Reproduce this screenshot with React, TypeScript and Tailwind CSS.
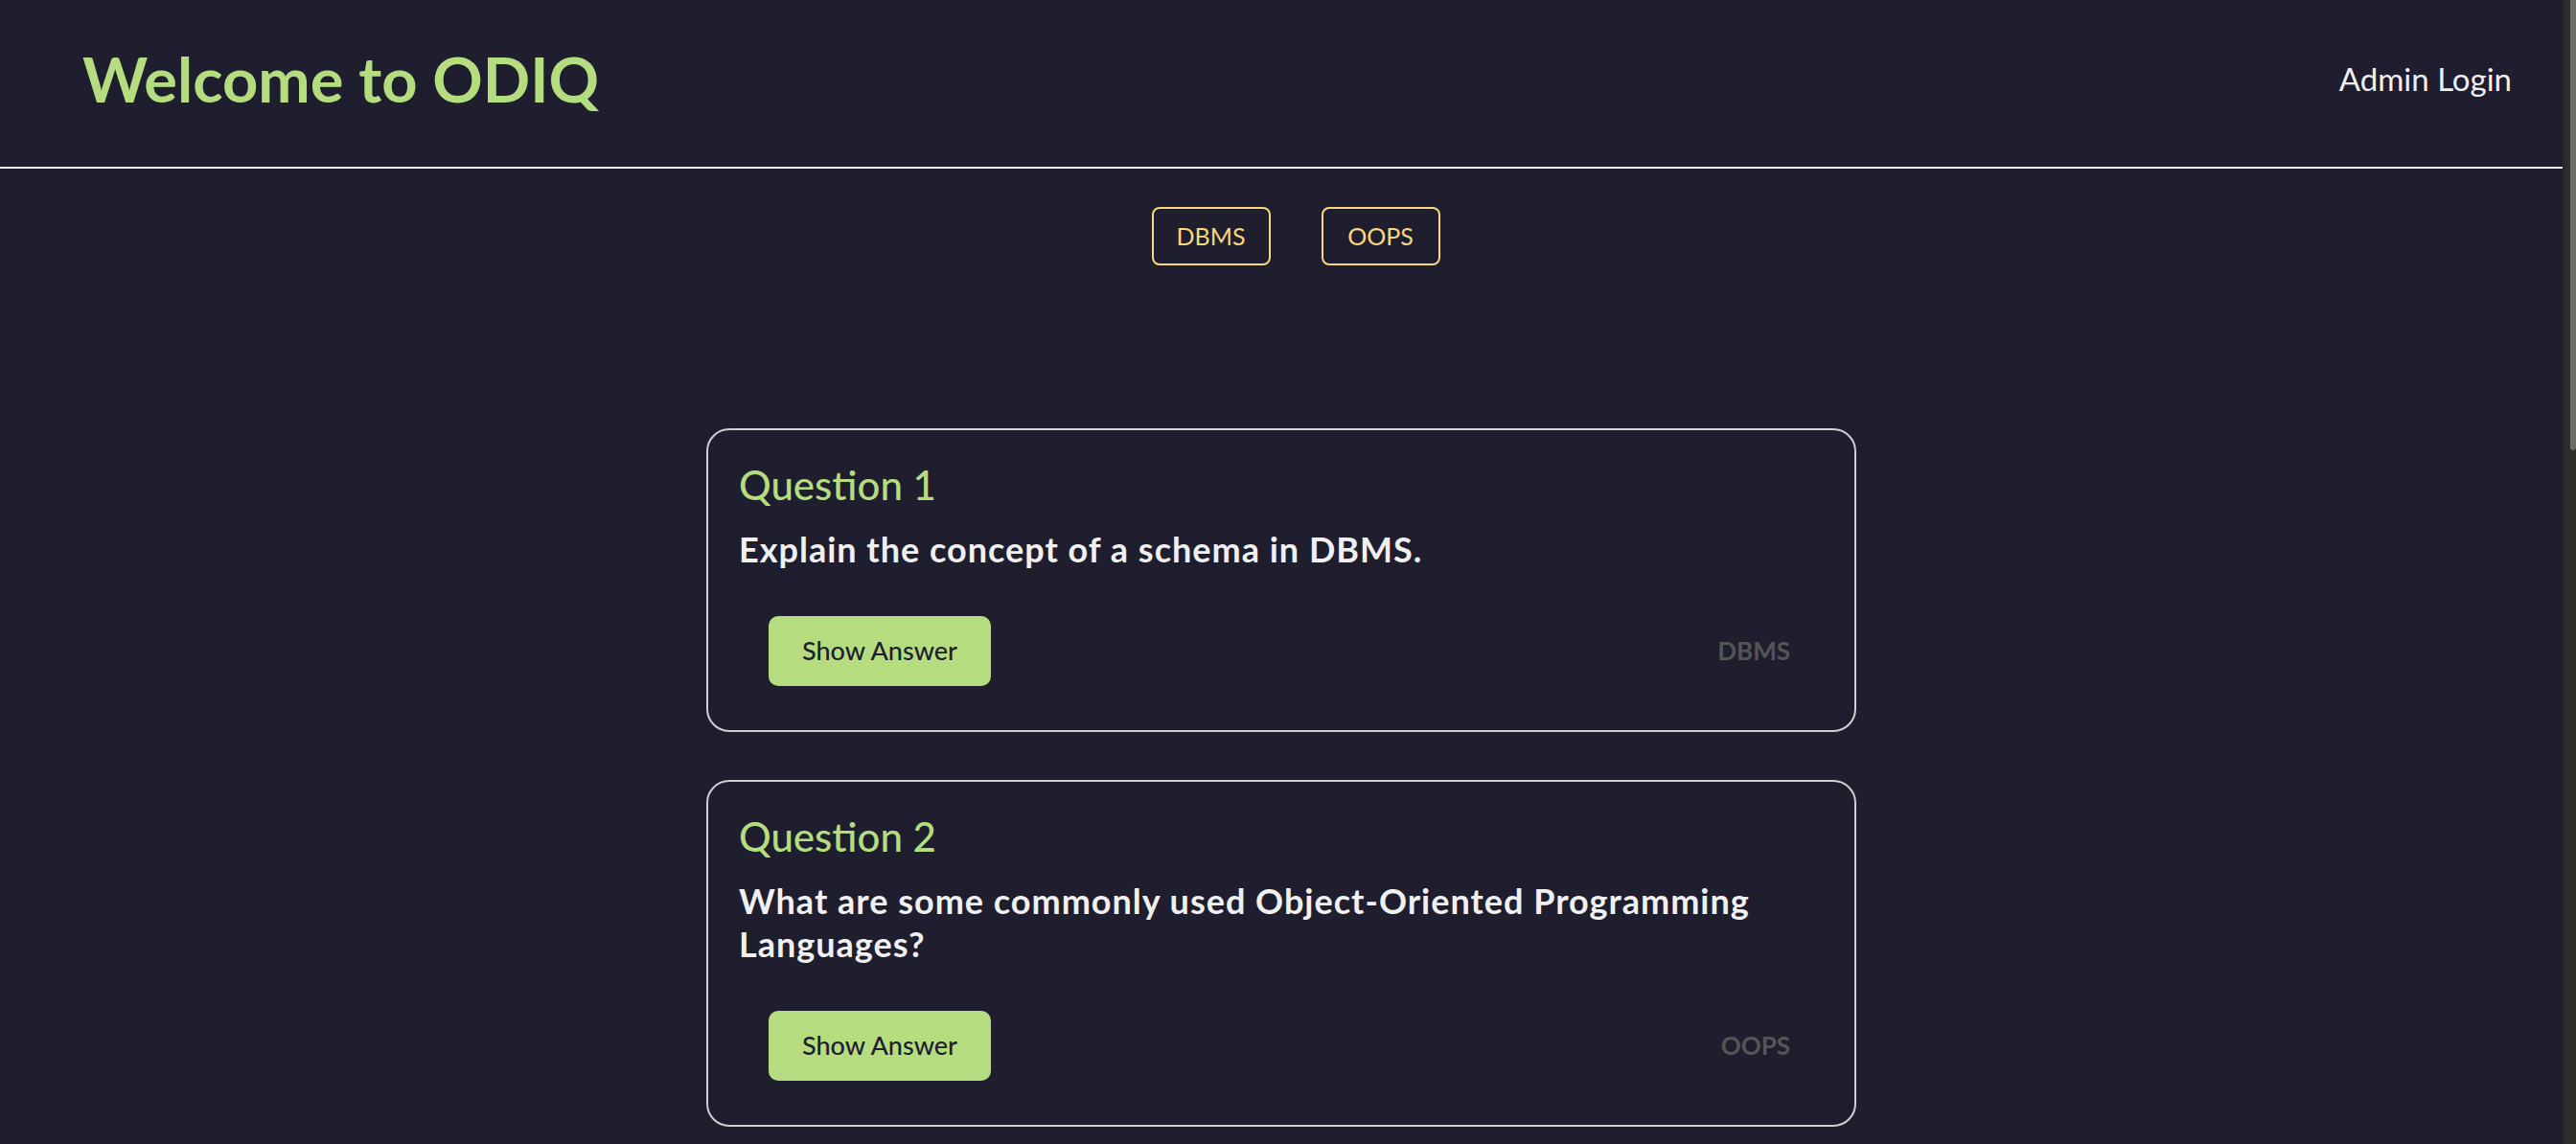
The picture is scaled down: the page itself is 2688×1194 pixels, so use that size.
import React, { useState } from 'react';

type Question = {
  id: number;
  text: string;
  answer: string;
  category: string;
};

const questions: Question[] = [
  {
    id: 1,
    text: 'Explain the concept of a schema in DBMS.',
    answer: 'A schema is the logical structure of a database: tables, fields, relationships and constraints.',
    category: 'DBMS',
  },
  {
    id: 2,
    text: 'What are some commonly used Object-Oriented Programming Languages?',
    answer: 'Java, C++, C#, Python, Ruby and Kotlin are some commonly used OOP languages.',
    category: 'OOPS',
  },
];

function QuestionCard({ q }: { q: Question }) {
  const [open, setOpen] = useState(false);

  return (
    <div className="w-[1200px] rounded-[24px] border-2 border-[#d0d0d0] px-[32px] pt-[27px] pb-[46px]">
      <h2 className="text-[42px] font-medium leading-[60px] text-[#b5dd80]">Question {q.id}</h2>
      <p className="mt-[15px] text-[36px] font-bold leading-[45px] tracking-[1px] text-[#f0f0f0]">{q.text}</p>
      {open && <p className="mt-4 text-[26px] text-[#d0d0d0]">{q.answer}</p>}
      <div className="mt-[47px] flex items-center justify-between pl-[31px] pr-[35px]">
        <button
          className="h-[73px] w-[232px] rounded-[10px] bg-[#b5dd80] text-[27px] font-medium text-[#1e1e2e]"
          onClick={() => setOpen(!open)}
        >
          {open ? 'Hide Answer' : 'Show Answer'}
        </button>
        <span className="text-[26px] font-bold text-[#555555]">{q.category}</span>
      </div>
    </div>
  );
}

export default function App() {
  const [filter, setFilter] = useState<string | null>(null);
  const shown = filter ? questions.filter((q) => q.category === filter) : questions;

  return (
    <div className="min-h-screen bg-[#1e1e2e] pr-[14px] font-['Lato',sans-serif]">
      {/* Header */}
      <header className="flex h-[176px] items-center justify-between border-b-2 border-[#f0f0f0] pl-[86px] pr-[53px] pb-[8px]">
        <h1 className="text-[65px] font-bold text-[#b5dd80]">Welcome to ODIQ</h1>
        <a href="#" className="text-[33px] text-[#f0f0f0]">Admin Login</a>
      </header>

      {/* Filters */}
      <div className="flex justify-center gap-[53px] pt-[40px] pl-[30px]">
        {['DBMS', 'OOPS'].map((c) => (
          <button
            key={c}
            className="h-[61px] w-[124px] rounded-[8px] border-2 border-[#f9d77e] text-[25px] text-[#f9d77e]"
            onClick={() => setFilter(filter === c ? null : c)}
          >
            {c}
          </button>
        ))}
      </div>

      {/* Questions */}
      <div className="flex flex-col items-center gap-[50px] pt-[170px] pb-[60px]">
        {shown.map((q) => (
          <QuestionCard key={q.id} q={q} />
        ))}
      </div>

      {/* scrollbar strip */}
      <div className="fixed top-0 right-0 h-screen w-[14px] border-l-2 border-[#262626] bg-[#2e2e2e]">
        <div className="absolute top-0 right-0 h-[470px] w-[6px] rounded-b-full bg-[#6b6b6b]" />
      </div>
    </div>
  );
}
